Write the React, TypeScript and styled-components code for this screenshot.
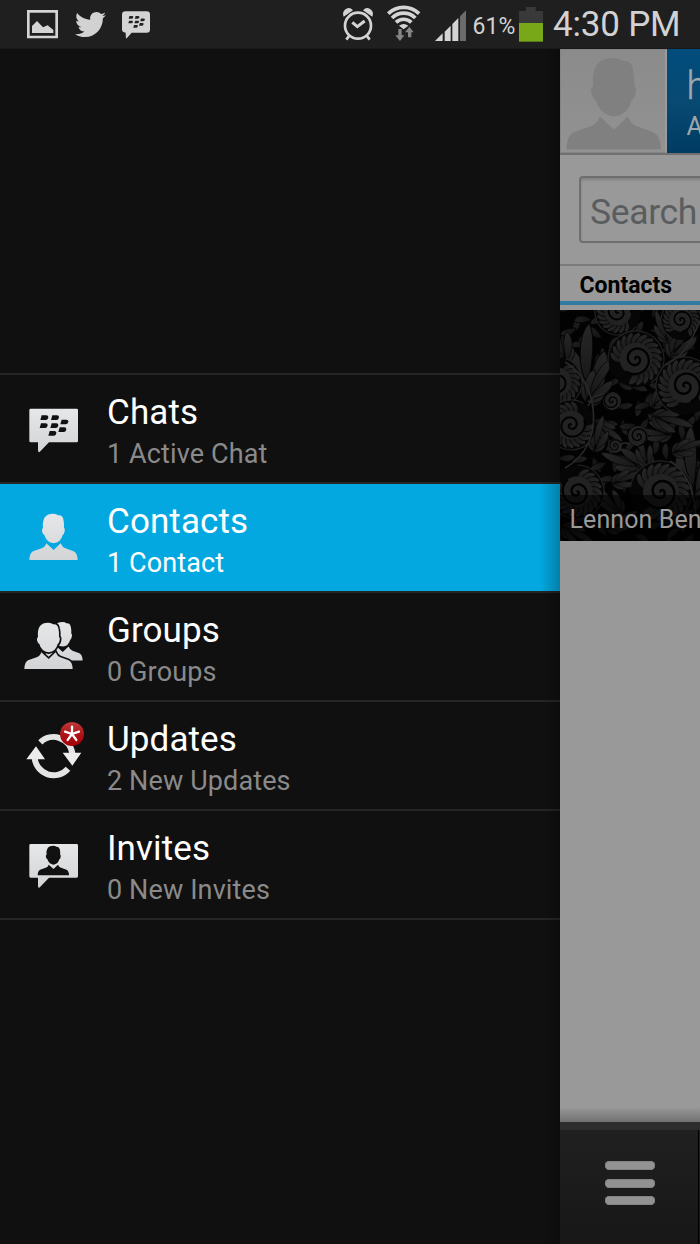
import React from "react";
import styled, { createGlobalStyle, css } from "styled-components";
import { FaTwitter } from "react-icons/fa";

const GlobalStyle = createGlobalStyle`
  * { box-sizing: border-box; }
  body { margin: 0; background: #111; font-family: Roboto, "Noto Sans", sans-serif; }
`;

const Screen = styled.div`
  width: 700px;
  height: 1244px;
  display: flex;
  flex-direction: column;
  overflow: hidden;
  background: #101010;
`;

const StatusBar = styled.header`
  height: 49px;
  flex: none;
  display: flex;
  justify-content: space-between;
  background: #1f1f1f;
  border-bottom: 1px solid #181818;
  color: #d2d2d2;
`;

const Notifications = styled.div`
  display: flex;
  gap: 15px;
  padding-left: 27px;
`;

const BirdSlot = styled.span`
  width: 33px;
  height: 48px;
  display: flex;
  align-items: center;
  justify-content: flex-end;
`;

const SystemIcons = styled.div`
  width: 358px;
  display: flex;
  align-items: flex-start;
  gap: 12px;
`;

const BatteryGroup = styled.div`
  display: flex;
  margin-left: -12px;
`;

const BatteryLevel = styled.span`
  width: 53px;
  padding-left: 6.5px;
  font-size: 23px;
  line-height: 53px;
  letter-spacing: 0.1px;
  white-space: nowrap;
`;

const Clock = styled.span`
  margin-left: -2px;
  font-size: 35px;
  line-height: 50px;
  letter-spacing: -0.2px;
  white-space: nowrap;
`;

const Body = styled.div`
  flex: 1;
  display: flex;
  min-height: 0;
`;

const Drawer = styled.nav`
  position: relative;
  width: 560px;
  flex: none;
  padding-top: 324px;
  background: #101010;
  &::after {
    content: "";
    position: absolute;
    top: 0;
    right: 0;
    bottom: 0;
    width: 20px;
    background: linear-gradient(to right, rgba(0, 0, 0, 0), rgba(0, 0, 0, 0.24));
  }
`;

const Menu = styled.ul`
  list-style: none;
  margin: 0;
  padding: 0;
  border-top: 2px solid #262626;
`;

const MenuRow = styled.li<{ $active?: boolean }>`
  height: 109px;
  display: flex;
  border-bottom: 2px solid #262626;
  ${(p) => p.$active && css`background: #03a8e0; background-clip: padding-box;`}
`;

const RowText = styled.div`
  padding-top: 17px;
`;

const RowTitle = styled.div`
  color: #fff;
  font-size: 35px;
  line-height: 42px;
  letter-spacing: 0.1px;
`;

const RowDetail = styled.div<{ $active?: boolean }>`
  margin-top: 3px;
  color: ${(p) => (p.$active ? "#fff" : "#8a8a8a")};
  font-size: 27px;
  line-height: 34px;
  letter-spacing: 0.12px;
`;

const Page = styled.main`
  width: 140px;
  flex: none;
  display: flex;
  flex-direction: column;
  overflow: hidden;
  background: #999;
`;

const Profile = styled.section`
  height: 106px;
  flex: none;
  display: flex;
  border-bottom: 2px solid #707070;
`;

const Avatar = styled.div`
  width: 107px;
  height: 104px;
  flex: none;
  background: linear-gradient(#8b8b8b, #929292);
  border: 1px solid #848484;
  border-right: 2px solid #9b9b9b;
`;

const ProfileName = styled.div`
  flex: 1;
  padding: 14px 0 0 19.5px;
  background: linear-gradient(#004c7c, #084a73 50%, #003b62);
  color: #a0a6aa;
  overflow: hidden;
  white-space: nowrap;
`;

const DisplayName = styled.div`
  font-size: 38px;
  font-weight: 300;
  line-height: 46px;
  -webkit-text-stroke: 0.4px #a0a6aa;
`;

const Presence = styled.div`
  font-size: 25px;
  line-height: 30px;
  margin-top: 3px;
`;

const SearchArea = styled.section`
  height: 111px;
  flex: none;
  padding: 21px 0 0 19px;
  border-bottom: 2px solid #7b7b7b;
`;

const SearchField = styled.div`
  width: 140px;
  height: 67px;
  padding-left: 9px;
  border: 2px solid #6e6e6e;
  border-radius: 4px;
  box-shadow: inset 0 2px 3px rgba(0, 0, 0, 0.16);
  color: #595d60;
  font-size: 35.5px;
  line-height: 68px;
  letter-spacing: -0.35px;
`;

const SectionTitle = styled.h2`
  height: 39px;
  flex: none;
  margin: 0 0 5px;
  padding-left: 19.5px;
  border-bottom: 4px solid #317ba2;
  color: #000;
  font-size: 23px;
  font-weight: 700;
  line-height: 39px;
`;

const ContactCard = styled.article`
  position: relative;
  height: 231px;
  flex: none;
  background: #020202;
`;

const ContactName = styled.div`
  position: absolute;
  left: 0;
  right: 0;
  bottom: 0;
  height: 46px;
  padding-left: 9.5px;
  overflow: hidden;
  background: rgba(0, 0, 0, 0.58);
  color: #999;
  font-size: 25px;
  line-height: 49px;
  letter-spacing: 0.1px;
  white-space: nowrap;
`;

const Blank = styled.div`
  flex: 1;
  background: linear-gradient(to top, #717171, #999 15px);
`;

const ActionBar = styled.footer`
  height: 122px;
  flex: none;
  border-top: 8px solid #2d2d2d;
  background: linear-gradient(#202020, #171717);
  display: flex;
`;

const MenuButton = styled.div`
  width: 139px;
  padding: 31px 0 0 44.5px;
  display: flex;
  flex-direction: column;
  gap: 8.5px;
  border-right: 1px solid #000;
`;

const Bar = styled.span`
  width: 50px;
  height: 9px;
  border-radius: 5px;
  background: #929292;
  box-shadow: inset 0 0 0 1px #858282;
`;

/* Status icons share one vertical scale: three drawing units per pixel. */
function StatusIcon({ x, w, children }: { x: number; w: number; children: React.ReactNode }) {
  return (
    <svg width={w / 3} height={48} viewBox={`${x} 0 ${w} 144`} fill="#d4d4d4" style={{ flex: "none" }}>
      {children}
    </svg>
  );
}

function RowIcon({ top, children }: { top: number; children: React.ReactNode }) {
  return (
    <svg width={107} height={107} viewBox={`0 ${top} 321 321`} fill="url(#silver)" style={{ flex: "none" }}>
      {children}
    </svg>
  );
}

const PERSON =
  "M135 111Q142 101 160 101Q170 101 174 106Q187 104 190 118Q193 130 192 144Q196 145 194 154Q192 164 188 165Q183 187 161 190Q139 187 133 165Q128 163 126 154Q125 146 129 144Q127 122 135 111Z" +
  "M139 190L161 210L182 190Q187 202 196 205L221 214Q232 219 233 240H88Q89 219 99 214L125 205Q135 202 139 190Z";

const SEGMENT = "M4 0H18Q24 0 24 5Q23 14 16 14H0Z";
const SEGMENTS = [[121, 136], [153, 136], [119, 160], [151, 160], [181, 149], [175, 172], [145, 183]];

function BerryMark({ color }: { color: string }) {
  return (
    <g fill={color}>
      {SEGMENTS.map(([x, y]) => (
        <path key={`${x}-${y}`} d={SEGMENT} transform={`translate(${x} ${y})`} />
      ))}
    </g>
  );
}

function ChatsIcon() {
  return (
    <RowIcon top={15}>
      <path d="M92 116H230Q234 116 234 120V213Q234 217 230 217H147L118 247Q114 247 114 240V217H92Q88 217 88 213V120Q88 116 92 116Z" />
      <BerryMark color="#111" />
    </RowIcon>
  );
}

function ContactsIcon() {
  return (
    <RowIcon top={12}>
      <path d={PERSON} />
    </RowIcon>
  );
}

function GroupsIcon() {
  return (
    <RowIcon top={9}>
      <path d={PERSON} transform="translate(54.6 12) scale(.83)" />
      <path d={PERSON} transform="translate(-15 -3)" stroke="#111" strokeWidth={10} paintOrder="stroke" />
    </RowIcon>
  );
}

function UpdatesIcon() {
  return (
    <RowIcon top={6}>
      <g fill="none" stroke="#e4e4e4" strokeWidth={18}>
        <path d="M121 127A57 57 0 0 1 217 160" />
        <path d="M104 173A57 57 0 0 0 204 206" />
      </g>
      <path d="M188 158H244L217 197ZM79 178H135L108 139Z" fill="#ececec" />
      <circle cx={216} cy={102} r={36} fill="url(#alert)" />
      <g stroke="#fff" strokeWidth={7} strokeLinecap="round">
        {[0, 72, 144, 216, 288].map((a) => (
          <path key={a} d="M216 102V80" transform={`rotate(${a} 216 102)`} />
        ))}
      </g>
    </RowIcon>
  );
}

function InvitesIcon() {
  return (
    <RowIcon top={3}>
      <path d="M92 102H230Q234 102 234 106V199Q234 203 230 203H147L118 233Q114 235 114 227V203H92Q88 203 88 199V106Q88 102 92 102Z" />
      <path d={PERSON} fill="#111" transform="translate(55.8 42.4) scale(.65 .64)" />
    </RowIcon>
  );
}

const ITEMS = [
  { title: "Chats", detail: "1 Active Chat", icon: <ChatsIcon /> },
  { title: "Contacts", detail: "1 Contact", icon: <ContactsIcon />, active: true },
  { title: "Groups", detail: "0 Groups", icon: <GroupsIcon /> },
  { title: "Updates", detail: "2 New Updates", icon: <UpdatesIcon /> },
  { title: "Invites", detail: "0 New Invites", icon: <InvitesIcon /> },
];

/* Curled leaf growing from the origin along +x. */
function Leaf({ x, y, a, l, w, flip }: { x: number; y: number; a: number; l: number; w: number; flip?: boolean }) {
  return (
    <path
      d={`M0 0C${l * 0.3} ${-w} ${l * 0.8} ${-w} ${l} ${w * 0.3}C${l * 0.8} ${w * 0.9} ${l * 0.4} ${w * 0.7} 0 0Z`}
      transform={`translate(${x} ${y}) rotate(${a}) scale(1 ${flip ? -1 : 1})`}
      fill="url(#leaf)"
      stroke="#050505"
      strokeWidth={0.8}
    />
  );
}

function spiralPath(r: number, turns: number) {
  const steps = Math.round(turns * 20);
  let d = "";
  for (let i = 0; i <= steps; i++) {
    const t = i / steps;
    const rad = r * Math.pow(t, 1.15);
    const ang = t * turns * Math.PI * 2;
    d += `${i ? "L" : "M"}${(rad * Math.cos(ang)).toFixed(2)} ${(rad * Math.sin(ang)).toFixed(2)}`;
  }
  return d;
}

function Scroll({ x, y, r, a, flip, bare }: { x: number; y: number; r: number; a: number; flip?: boolean; bare?: boolean }) {
  const core = bare ? r : r * 0.58;
  return (
    <g transform={`translate(${x} ${y}) rotate(${a}) scale(1 ${flip ? -1 : 1})`}>
      <circle r={r} fill="#060606" />
      {!bare && (
        <>
          <circle r={r} fill="none" stroke="#222" strokeWidth={1.2} strokeDasharray={`${r * 4.4} ${r * 2}`} />
          {Array.from({ length: 17 }, (_, i) => {
            const deg = i * 17;
            const t = (deg * Math.PI) / 180;
            return (
              <Leaf key={i} x={Math.cos(t) * r * 0.42} y={Math.sin(t) * r * 0.42} a={deg + 42} l={r * 0.62} w={r * 0.19} />
            );
          })}
        </>
      )}
      <circle r={core} fill="#222" />
      <path d={spiralPath(core, 1.9)} fill="none" stroke="#020202" strokeWidth={core * 0.14} />
    </g>
  );
}

function Plume({ x, y, a, s }: { x: number; y: number; a: number; s: number }) {
  return (
    <g transform={`translate(${x} ${y}) rotate(${a}) scale(${s})`}>
      <Leaf x={0} y={0} a={-38} l={20} w={6} />
      <Leaf x={0} y={0} a={40} l={21} w={6} flip />
      <Leaf x={4} y={-1} a={-22} l={31} w={7} />
      <Leaf x={4} y={1} a={24} l={32} w={7} flip />
      <Leaf x={8} y={0} a={-3} l={46} w={7} />
    </g>
  );
}

function Undergrowth() {
  return (
    <g opacity={0.8}>
      {Array.from({ length: 130 }, (_, i) => {
        const x = (i % 10) * 15 + ((i * 7) % 9) - 4;
        const y = Math.floor(i / 10) * 18 + ((i * 5) % 11);
        return <Leaf key={i} x={x} y={y} a={(x * 3 + y * 2 + (i % 3) * 35) % 360} l={17} w={5} flip={i % 2 === 0} />;
      })}
    </g>
  );
}

function FloralPattern() {
  return (
    <svg width={140} height={231} viewBox="0 0 140 231" style={{ display: "block" }}>
      <Undergrowth />
      <Plume x={27} y={86} a={-88} s={1.35} />
      <Plume x={26} y={92} a={-58} s={0.95} />
      <Plume x={7} y={54} a={-110} s={0.9} />
      <Plume x={134} y={188} a={-92} s={1.35} />
      <Plume x={34} y={112} a={35} s={0.65} />
      <Plume x={112} y={125} a={-170} s={0.75} />
      <Plume x={92} y={98} a={-55} s={0.55} />
      <Plume x={92} y={106} a={15} s={0.8} />
      <Plume x={34} y={142} a={-75} s={0.7} />
      <Plume x={84} y={158} a={-160} s={0.85} />
      <Plume x={88} y={158} a={-105} s={0.65} />
      <Plume x={112} y={143} a={-20} s={0.65} />
      <Plume x={110} y={48} a={-58} s={0.95} />
      <Plume x={108} y={33} a={-110} s={0.65} />
      <Plume x={62} y={205} a={-130} s={0.75} />
      <Plume x={52} y={174} a={-20} s={0.65} />
      <Plume x={46} y={220} a={-30} s={0.7} />
      <Plume x={2} y={216} a={30} s={0.7} />
      <Scroll x={58} y={2} r={23} a={40} />
      <Scroll x={121} y={10} r={20} a={120} />
      <Scroll x={-3} y={72} r={25} a={-70} />
      <Scroll x={76} y={49} r={28} a={165} />
      <Scroll x={125} y={76} r={29} a={105} />
      <Scroll x={11} y={115} r={25} a={-60} flip />
      <Scroll x={17} y={182} r={27} a={-90} />
      <Scroll x={101} y={182} r={31} a={190} />
      <Scroll x={52} y={91} r={9} a={-60} bare />
      <Scroll x={78} y={126} r={10} a={120} bare />
      <Scroll x={55} y={136} r={7} a={20} bare />
      <g fill="none" stroke="#292929" strokeWidth={1.6}>
        <path d="M5 52C38 70 48 135 5 158" />
        <path d="M28 96Q33 84 44 84" />
        <path d="M105 55Q122 48 132 28T140 10" />
        <path d="M70 134Q58 130 60 141" />
        <path d="M110 151Q134 166 136 207" />
      </g>
    </svg>
  );
}

function Gradients() {
  return (
    <svg width={0} height={0} style={{ position: "absolute" }}>
      <defs>
        <linearGradient id="silver" x1="0" y1="0" x2="0" y2="1">
          <stop offset="0" stopColor="#e6e7e8" />
          <stop offset="1" stopColor="#d3d4d6" />
        </linearGradient>
        <linearGradient id="alert" x1="0" y1="0" x2="0" y2="1">
          <stop offset="0" stopColor="#bd3a3c" />
          <stop offset="0.5" stopColor="#b01518" />
          <stop offset="1" stopColor="#a00006" />
        </linearGradient>
        <linearGradient id="leaf" x1="0" y1="0" x2="1" y2="0">
          <stop offset="0" stopColor="#171717" />
          <stop offset="1" stopColor="#272727" />
        </linearGradient>
      </defs>
    </svg>
  );
}

export default function App() {
  return (
    <Screen>
      <GlobalStyle />
      <Gradients />
      <StatusBar>
        <Notifications>
          <StatusIcon x={81} w={93}>
            <path d="M81 30H174V115H81ZM89 38V107H166V38Z" fillRule="evenodd" />
            <path d="M96 99V78L111 63L129 82L143 76L160 90V99Z" />
          </StatusIcon>
          <BirdSlot>
            <FaTwitter size={31} />
          </BirdSlot>
          <StatusIcon x={363} w={90}>
            <path d="M377 34H440Q450 34 450 44V89Q450 98 440 98H395L379 116Q377 112 377 98Q366 98 366 88V44Q366 34 377 34Z" />
            <g transform="translate(316.5 -30) scale(.575)">
              <BerryMark color="#222" />
            </g>
          </StatusIcon>
        </Notifications>
        <SystemIcons>
          <StatusIcon x={36} w={96}>
            <circle cx={84} cy={77} r={39} fill="none" stroke="#d4d4d4" strokeWidth={8} />
            <path d="M41 50L69 31Q60 21 49 26Q35 34 41 50ZM127 50L99 31Q108 21 119 26Q133 34 127 50Z" />
            <path d="M58 107L49 119M110 107L119 119" stroke="#d4d4d4" strokeWidth={8} />
            <path d="M67 67L82 80L104 63" fill="none" stroke="#d4d4d4" strokeWidth={9} />
          </StatusIcon>
          <StatusIcon x={168} w={108}>
            <g fill="none" stroke="#d4d4d4" strokeWidth={11}>
              <path d="M174.7 41A66 66 0 0 1 267.3 41" />
              <path d="M186 54A49 49 0 0 1 256 54" />
              <path d="M198 67A33 33 0 0 1 244 67" />
            </g>
            <path d="M207 77Q221 67 235 77L221 88Z" />
            <path d="M205 87H215V106H223L210 123L196 106H205ZM234 112H244V97H251L238 80L225 97H234Z" fill="#858585" />
          </StatusIcon>
          <StatusIcon x={312} w={96}>
            <path d="M315 123L338 100V123ZM344 123V95L362 77V123ZM367 123V72L385 54V123Z" />
            <path d="M390 123V49L408 31V123Z" fill="#6c6c6c" />
          </StatusIcon>
          <BatteryGroup>
            <BatteryLevel>61%</BatteryLevel>
            <StatusIcon x={567} w={72}>
              <path d="M588 21H617V33H639V69H567V33H588Z" fill="#393939" />
              <path d="M567 69H639V125H567Z" fill="#78a818" />
            </StatusIcon>
          </BatteryGroup>
          <Clock>4:30 PM</Clock>
        </SystemIcons>
      </StatusBar>
      <Body>
        <Drawer>
          <Menu>
            {ITEMS.map((item) => (
              <MenuRow key={item.title} $active={item.active}>
                {item.icon}
                <RowText>
                  <RowTitle>{item.title}</RowTitle>
                  <RowDetail $active={item.active}>{item.detail}</RowDetail>
                </RowText>
              </MenuRow>
            ))}
          </Menu>
        </Drawer>
        <Page>
          <Profile>
            <Avatar>
              <svg width={104} height={102} viewBox="33 30 312 306" fill="#808080">
                <path d={PERSON} transform="translate(-123.5 -145) scale(1.96 1.97)" />
              </svg>
            </Avatar>
            <ProfileName>
              <DisplayName>h</DisplayName>
              <Presence>A</Presence>
            </ProfileName>
          </Profile>
          <SearchArea>
            <SearchField>Search</SearchField>
          </SearchArea>
          <SectionTitle>Contacts</SectionTitle>
          <ContactCard>
            <FloralPattern />
            <ContactName>Lennon Ben</ContactName>
          </ContactCard>
          <Blank />
          <ActionBar>
            <MenuButton>
              <Bar />
              <Bar />
              <Bar />
            </MenuButton>
          </ActionBar>
        </Page>
      </Body>
    </Screen>
  );
}
